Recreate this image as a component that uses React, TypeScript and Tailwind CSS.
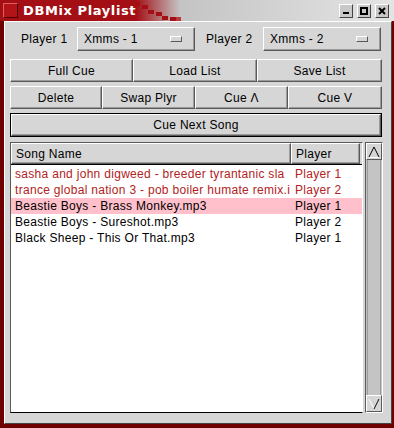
import React from "react";

const font = { fontFamily: '"Liberation Sans", Arial, sans-serif' };

function Bevel({ children, className = "" }: { children?: React.ReactNode; className?: string }) {
  return (
    <div
      className={`flex items-center justify-center bg-[#d6d6d6] border border-t-white border-l-white border-b-[#5a5a5a] border-r-[#5a5a5a] shadow-[inset_-1px_-1px_0_#9a9a9a] text-[12px] tracking-[0.3px] text-black ${className}`}
    >
      {children}
    </div>
  );
}

function OptionMenu({ label }: { label: string }) {
  return (
    <div className="flex items-center justify-between w-[118px] h-[24px] pl-[6px] pr-[12px] bg-[#d6d6d6] border border-t-white border-l-white border-b-[#5a5a5a] border-r-[#5a5a5a] shadow-[inset_-1px_-1px_0_#9a9a9a] text-[12px] tracking-[0.3px]">
      <span>{label}</span>
      <span className="w-[12px] h-[6px] border border-t-white border-l-white border-b-[#5a5a5a] border-r-[#5a5a5a] bg-[#d6d6d6]" />
    </div>
  );
}

const rows = [
  { name: "sasha and john digweed - breeder tyrantanic sla", player: "Player 1", red: true },
  { name: "trance global nation 3 - pob boiler humate remix.i", player: "Player 2", red: true },
  { name: "Beastie Boys - Brass Monkey.mp3", player: "Player 1", sel: true },
  { name: "Beastie Boys - Sureshot.mp3", player: "Player 2" },
  { name: "Black Sheep - This Or That.mp3", player: "Player 1" },
];

function TitleButton({ kind }: { kind: "min" | "max" | "close" }) {
  return (
    <div className="w-[14px] h-[14px] bg-[#c8c8c8] border border-t-white border-l-white border-b-[#444] border-r-[#444] flex items-center justify-center">
      <svg width="10" height="10" viewBox="0 0 10 10">
        {kind === "min" && <rect x="2" y="6" width="6" height="2" fill="#000" />}
        {kind === "max" && <rect x="2" y="2" width="6" height="6" fill="none" stroke="#000" strokeWidth="2" />}
        {kind === "close" && (
          <path d="M2 2 L8 8 M8 2 L2 8" stroke="#000" strokeWidth="2" />
        )}
      </svg>
    </div>
  );
}

export default function App() {
  return (
    <div className="w-[394px] h-[428px] bg-[#6e0000] flex flex-col overflow-hidden" style={font}>
      {/* title bar */}
      <div className="relative h-[21px] flex items-center shrink-0 bg-[linear-gradient(to_right,#a30f15_0px,#a30f15_136px,#c4c4c4_180px,#e4e4e4_394px)]">
        <div className="ml-[3px] w-[15px] h-[15px] bg-[#b3141a] border border-t-[#e06060] border-l-[#e06060] border-b-[#500000] border-r-[#500000]" />
        <span className="ml-[5px] text-white font-bold text-[13px] tracking-[0.6px]" style={{ fontFamily: '"DejaVu Sans", sans-serif' }}>
          DBMix Playlist
        </span>
        <svg className="absolute left-[134px] top-[2px]" width="48" height="20" viewBox="0 0 48 20">
          <rect x="0" y="0" width="6" height="4" fill="#a30f15" />
          <rect x="8" y="3" width="6" height="4" fill="#a30f15" />
          <rect x="14" y="8" width="6" height="4" fill="#a30f15" />
          <rect x="22" y="10" width="6" height="4" fill="#a30f15" />
          <rect x="28" y="14" width="6" height="4" fill="#a30f15" />
          <rect x="36" y="15" width="6" height="4" fill="#a30f15" />
          <rect x="42" y="15" width="5" height="4" fill="#b83a3a" />
        </svg>
        <div className="ml-auto mr-[5px] flex gap-[4px]">
          <TitleButton kind="min" />
          <TitleButton kind="max" />
          <TitleButton kind="close" />
        </div>
      </div>

      {/* client */}
      <div className="flex-1 ml-[4px] mr-[2px] mb-[4px] bg-[#d6d6d6] border border-t-white border-l-white border-b-[#444] border-r-[#444] flex flex-col px-[5px] text-[12px] text-black">
        <div className="flex items-center mt-[5px] h-[24px] tracking-[0.3px]">
          <span className="ml-[11px] w-[56px]">Player 1</span>
          <OptionMenu label="Xmms - 1" />
          <span className="ml-[11px] w-[57px]">Player 2</span>
          <OptionMenu label="Xmms - 2" />
        </div>

        <div className="flex mt-[8px] h-[23px]">
          <Bevel className="w-[123px]">Full Cue</Bevel>
          <Bevel className="w-[124px]">Load List</Bevel>
          <Bevel className="w-[125px]">Save List</Bevel>
        </div>

        <div className="flex mt-[4px] h-[23px]">
          <Bevel className="w-[92px]">Delete</Bevel>
          <Bevel className="w-[93px]">Swap Plyr</Bevel>
          <Bevel className="w-[93px]">Cue Λ</Bevel>
          <Bevel className="w-[94px]">Cue V</Bevel>
        </div>

        <div className="mt-[4px] w-[372px] h-[24px] border border-black">
          <Bevel className="w-full h-full">Cue Next Song</Bevel>
        </div>

        <div className="flex mt-[5px] flex-1 mb-[10px]">
          {/* list */}
          <div className="w-[353px] border border-t-[#5a5a5a] border-l-[#5a5a5a] border-b-black border-r-white flex flex-col bg-white">
            <div className="flex h-[22px] bg-[#d6d6d6] border-b border-black">
              <Bevel className="w-[280px] !justify-start pl-[4px]">Song Name</Bevel>
              <Bevel className="w-[69px] !justify-start pl-[4px]">Player</Bevel>
            </div>
            <div className="flex flex-col pt-[1px] tracking-[0.3px]">
              {rows.map((r, i) => (
                <div
                  key={i}
                  className={`flex h-[16px] items-center ${r.sel ? "bg-[#ffc0cb]" : ""} ${r.red ? "text-[#b22222]" : "text-black"}`}
                >
                  <span className="w-[280px] pl-[4px] whitespace-nowrap overflow-hidden">{r.name}</span>
                  <span className="pl-[4px]">{r.player}</span>
                </div>
              ))}
            </div>
          </div>

          {/* scrollbar */}
          <div className="ml-[2px] w-[18px] bg-[#c4c4c4] border border-t-[#5a5a5a] border-l-[#5a5a5a] border-b-white border-r-white flex flex-col justify-between">
            <div className="h-[17px] bg-[#d6d6d6] border border-t-white border-l-white border-b-[#5a5a5a] border-r-[#5a5a5a] flex items-center justify-center">
              <svg width="12" height="12" viewBox="0 0 12 12">
                <path d="M1 11 L6 1 L11 11" fill="none" stroke="#000" strokeWidth="1" />
                <path d="M1 11.5 H11" stroke="#fff" />
              </svg>
            </div>
            <div className="flex-1 mx-[1px] border-x border-[#9a9a9a]" />
            <div className="h-[17px] bg-[#d6d6d6] border border-t-white border-l-white border-b-[#5a5a5a] border-r-[#5a5a5a] flex items-center justify-center">
              <svg width="12" height="12" viewBox="0 0 12 12">
                <path d="M1 1 L6 11 L11 1" fill="none" stroke="#fff" strokeWidth="1" />
                <path d="M6 11 L11 1" stroke="#000" />
              </svg>
            </div>
          </div>
        </div>
      </div>
    </div>
  );
}
